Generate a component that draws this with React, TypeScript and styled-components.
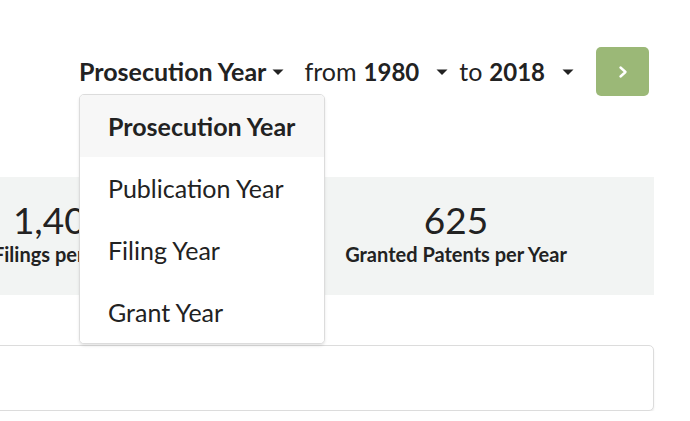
import React, { useState } from "react"
import styled, { createGlobalStyle } from "styled-components"

const GlobalStyle = createGlobalStyle`
	html, body {
		margin: 0;
		padding: 0;
		background: #fff;
		overflow: hidden;
	}
	body {
		font-family: Lato, "Open Sans", "Liberation Sans", sans-serif;
		color: #222;
	}
`

const yearTypes = ["Prosecution Year", "Publication Year", "Filing Year", "Grant Year"]

const stats = [
	{ value: "1,400", label: "Filings per Year" },
	{ value: "625", label: "Granted Patents per Year" }
]

const Caret = () => (
	<svg width="12" height="7" viewBox="0 0 12 7">
		<path d="M0.5 0.5 L11.5 0.5 L6 6 Z" fill="#222" />
	</svg>
)

const Chevron = () => (
	<svg width="12" height="14" viewBox="0 0 12 14">
		<path d="M3.5 2.5 L8.5 7 L3.5 11.5" fill="none" stroke="#fff" strokeWidth="2.4" strokeLinecap="round" strokeLinejoin="round" />
	</svg>
)

const App = () => {
	const [yearType, setYearType] = useState(yearTypes[0])
	const [open, setOpen] = useState(true)
	return (
		<>
			<GlobalStyle />
			<Page>
				<Toolbar>
					<SelectWrap>
						<Trigger onClick={() => setOpen(!open)}>
							<Strong>{yearType}</Strong>
							<Caret />
						</Trigger>
						{open && (
							<Menu>
								{yearTypes.map((item) => (
									<MenuItem
										key={item}
										$active={item === yearType}
										onClick={() => {
											setYearType(item)
											setOpen(false)
										}}
									>
										{item}
									</MenuItem>
								))}
							</Menu>
						)}
					</SelectWrap>
					<Range>
						<Word>from</Word>
						<Year>1980</Year>
						<CaretBox>
							<Caret />
						</CaretBox>
					</Range>
					<Range>
						<Word>to</Word>
						<Year>2018</Year>
						<CaretBox>
							<Caret />
						</CaretBox>
					</Range>
					<GoButton>
						<Chevron />
					</GoButton>
				</Toolbar>
				<StatsBand>
					{stats.map((s) => (
						<Stat key={s.label}>
							<StatValue>{s.value}</StatValue>
							<StatLabel>{s.label}</StatLabel>
						</Stat>
					))}
				</StatsBand>
				<Panel />
			</Page>
		</>
	)
}

const Page = styled.div`
	width: 792px;
	margin-left: -138px;
`

const Toolbar = styled.div`
	display: flex;
	justify-content: flex-end;
	align-items: center;
	padding: 47px 5px 0 0;
	font-size: 25px;
	line-height: 49px;
`

const SelectWrap = styled.div`
	position: relative;
	margin-right: 20px;
`

const Trigger = styled.div`
	display: flex;
	align-items: center;
	gap: 6px;
	cursor: pointer;
	svg {
		margin-top: 2px;
	}
`

const Strong = styled.span`
	font-weight: 700;
	color: #222;
`

const Year = styled(Strong)`
	font-size: 24px;
`

const Word = styled.span`
	font-weight: 400;
	color: #222;
	margin-right: 7px;
`

const Range = styled.div`
	display: flex;
	align-items: center;
	margin-right: 11px;
	&:last-of-type {
		margin-right: 22px;
	}
`

const CaretBox = styled.span`
	display: flex;
	align-items: center;
	margin-left: 17px;
	margin-top: 2px;
`

const GoButton = styled.button`
	width: 53px;
	height: 49px;
	border: none;
	border-radius: 5px;
	background: #9bb877;
	display: flex;
	align-items: center;
	justify-content: center;
	cursor: pointer;
	padding: 0;
`

const Menu = styled.div`
	position: absolute;
	top: 47px;
	left: 0;
	width: 244px;
	background: #fff;
	border: 1px solid #dcdcdc;
	border-radius: 5px;
	box-shadow: 0 2px 3px rgba(0, 0, 0, 0.1);
	overflow: hidden;
	z-index: 10;
`

const MenuItem = styled.div<{ $active: boolean }>`
	height: 62px;
	display: flex;
	align-items: center;
	padding-left: 28px;
	font-size: 25px;
	line-height: 1;
	font-weight: ${({ $active }) => ($active ? 700 : 400)};
	background: ${({ $active }) => ($active ? "#f7f7f7" : "#fff")};
	color: #222;
	cursor: pointer;
`

const StatsBand = styled.div`
	margin-top: 81px;
	height: 118px;
	background: #f2f4f3;
	display: grid;
	grid-template-columns: 1fr 1fr;
`

const Stat = styled.div`
	display: flex;
	flex-direction: column;
	align-items: center;
	justify-content: center;
	padding-bottom: 6px;
`

const StatValue = styled.div`
	font-size: 37px;
	line-height: 42px;
	color: #222;
`

const StatLabel = styled.div`
	font-size: 20px;
	font-weight: 700;
	line-height: 26px;
	color: #222;
`

const Panel = styled.div`
	margin-top: 50px;
	height: 64px;
	border: 1px solid #dcdcdc;
	border-radius: 5px;
	box-shadow: 0 2px 2px rgba(0, 0, 0, 0.08);
	background: #fff;
	width: 790px;
`

export default App
